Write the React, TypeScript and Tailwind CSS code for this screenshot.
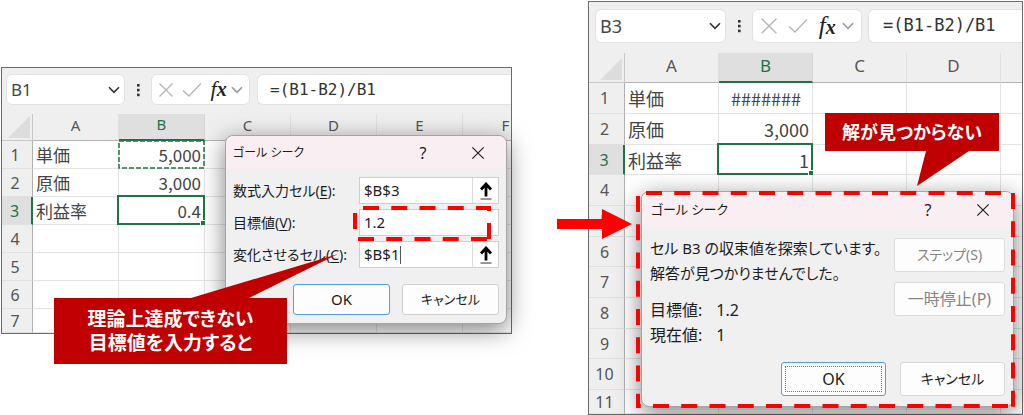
import { useId, type ReactNode } from "react";
import clsx from "clsx";

type Size = "sm" | "lg";
type Mark = "copied" | "selected";

interface Cell {
  label?: string;
  value?: string;
  mark?: Mark;
}

const SHEET_STYLES = {
  sm: {
    bar: "pt-1.5 pb-[9px] pl-1",
    box: "h-[31px]",
    nameBox: "w-[119px]",
    tools: "w-[99px] mr-[7px] px-1.5",
    headCol: "w-[31px]",
    col: "w-[86px]",
    headRow: "h-[27px] text-[15px]",
    row: "h-7 last:h-6",
    text: "text-[17px]",
    formula: "text-[16px] pl-3",
    tool: "size-4",
    fx: "text-[22px]",
  },
  lg: {
    bar: "pt-[7px] pb-2.5 pl-1.5",
    box: "h-[34px]",
    nameBox: "w-[131px]",
    tools: "w-[110px] mr-1.5 px-[7px]",
    headCol: "w-9",
    col: "w-[94px]",
    headRow: "h-[30px] text-[17px]",
    row: "h-[31px] nth-[3n]:h-[30px] last:h-6",
    text: "text-[18px]",
    formula: "text-[17px] pl-3.5",
    tool: "size-[18px]",
    fx: "text-[25px]",
  },
};

const LEFT_ROWS: Cell[] = [
  { label: "単価", value: "5,000", mark: "copied" },
  { label: "原価", value: "3,000" },
  { label: "利益率", value: "0.4", mark: "selected" },
  {},
  {},
  {},
  {},
];

const RIGHT_ROWS: Cell[] = [
  { label: "単価", value: "#######" },
  { label: "原価", value: "3,000" },
  { label: "利益率", value: "1", mark: "selected" },
  {},
  {},
  {},
  {},
  {},
  {},
  {},
  {},
];

function Chevron({ className }: { className?: string }) {
  return (
    <svg viewBox="0 0 12 8" className={clsx("h-2 w-3", className)} fill="none" stroke="currentColor" strokeWidth="1.6">
      <path d="M1 1.2 6 6.4 11 1.2" />
    </svg>
  );
}

function CloseIcon({ className }: { className?: string }) {
  return (
    <svg viewBox="0 0 16 16" className={className} fill="none" stroke="currentColor" strokeWidth="1.3">
      <path d="M1.5 1.5 14.5 14.5M14.5 1.5 1.5 14.5" />
    </svg>
  );
}

function FormulaBar({ size, name }: { size: Size; name: string }) {
  const s = SHEET_STYLES[size];
  const box = clsx("flex shrink-0 items-center border border-[#e2e2e2] bg-white", s.box);

  return (
    <div className={clsx("flex items-center", s.bar)}>
      <div className={clsx(box, s.nameBox, "rounded-md pr-1 pl-1")}>
        <input
          aria-label="名前ボックス"
          defaultValue={name}
          className={clsx("w-full min-w-0 bg-transparent text-[#444] outline-none", s.text)}
        />
        <button type="button" aria-label="名前の一覧" className="text-[#333]">
          <Chevron />
        </button>
      </div>
      <svg viewBox="0 0 26 14" className="h-3.5 w-[26px] shrink-0" fill="#333">
        <rect x="12" y="1" width="2.6" height="2.6" />
        <rect x="12" y="5.8" width="2.6" height="2.6" />
        <rect x="12" y="10.6" width="2.6" height="2.6" />
      </svg>
      <div className={clsx(box, s.tools, "justify-between rounded-md text-[#b5b5b5]")}>
        <button type="button" aria-label="キャンセル">
          <CloseIcon className={s.tool} />
        </button>
        <button type="button" aria-label="入力" className="ml-1">
          <svg viewBox="0 0 20 16" className="h-4 w-5" fill="none" stroke="currentColor" strokeWidth="1.3">
            <path d="M1 8.5 7 14 19 1.5" />
          </svg>
        </button>
        <button
          type="button"
          aria-label="関数の挿入"
          className={clsx("ml-1 pb-0.5 font-['Liberation_Serif',serif] leading-none text-[#222] italic", s.fx)}
        >
          f<b className="text-[20px]">x</b>
        </button>
        <Chevron className="text-[#999]" />
      </div>
      <div className={clsx(box, s.formula, "min-w-0 flex-1 shrink rounded-l-md border-r-0")}>
        <input
          aria-label="数式バー"
          defaultValue="=(B1-B2)/B1"
          className="w-full min-w-0 bg-transparent font-['DejaVu_Sans_Mono',monospace] text-[#333] outline-none"
        />
      </div>
    </div>
  );
}

function CellMark({ mark }: { mark: Mark }) {
  if (mark === "copied") {
    return (
      <svg className="absolute inset-0 size-full overflow-visible" fill="none" stroke="#217346" strokeWidth="1.5" strokeDasharray="5 2">
        <rect width="100%" height="100%" />
      </svg>
    );
  }
  return (
    <span className="absolute -top-0.5 -right-px -bottom-px -left-0.5 border-2 border-[#217346]">
      <span className="absolute -right-[3px] -bottom-[3px] size-[5px] bg-[#217346] outline outline-white" />
    </span>
  );
}

function Sheet({ size, name, columns, rows }: { size: Size; name: string; columns: string[]; rows: Cell[] }) {
  const s = SHEET_STYLES[size];

  return (
    <div className="overflow-hidden border border-[#6b6b6b] bg-[#efefef]">
      <FormulaBar size={size} name={name} />
      <table className="w-full table-fixed border-separate border-spacing-0">
        <colgroup>
          <col className={s.headCol} />
          {columns.map((c) => (
            <col key={c} className={s.col} />
          ))}
        </colgroup>
        <thead>
          <tr className={s.headRow}>
            <th className="border-r border-b border-[#c8c8c8] p-0.5 pl-1.5 align-bottom">
              <svg viewBox="0 0 22 22" className="ml-auto block size-[22px]" fill="#dcdcdc">
                <path d="M22 0V22H0Z" />
              </svg>
            </th>
            {columns.map((c) => (
              <th
                key={c}
                scope="col"
                className={clsx(
                  "border-r p-0 pb-1 leading-none font-normal",
                  c === "B"
                    ? "border-b-2 border-r-[#d5d5d5] border-b-[#217346] bg-[#dfdfdf] text-[#217346]"
                    : "border-b border-r-[#e0e0e0] border-b-[#b5b5b5] text-[#555]",
                )}
              >
                {c}
              </th>
            ))}
          </tr>
        </thead>
        <tbody>
          {rows.map((row, i) => (
            <tr key={i} className={s.row}>
              <th
                scope="row"
                className={clsx(
                  "border-b border-b-[#e0e0e0] p-0 text-[16px] leading-none font-normal",
                  row.mark === "selected"
                    ? "border-r-2 border-r-[#217346] bg-[#dfdfdf] pr-1 text-[#217346]"
                    : "border-r border-r-[#b0b0b0] pr-1 text-[#555]",
                )}
              >
                {i + 1}
              </th>
              {columns.map((c) => (
                <td
                  key={c}
                  className={clsx(
                    "relative border-r border-b border-[#e4e4e4] bg-white p-0 px-[3px] font-['Noto_Sans_CJK_JP',sans-serif] leading-none whitespace-nowrap text-[#444]",
                    s.text,
                    c === "B" && "text-right",
                  )}
                >
                  {c === "A" && row.label}
                  {c === "B" && (row.value?.startsWith("#") ? <span className="mr-2">{row.value}</span> : row.value)}
                  {c === "B" && row.mark && <CellMark mark={row.mark} />}
                </td>
              ))}
            </tr>
          ))}
        </tbody>
      </table>
    </div>
  );
}

function Dialog({ className, titleClass, children }: { className: string; titleClass: string; children: ReactNode }) {
  return (
    <section
      role="dialog"
      aria-label="ゴール シーク"
      className={clsx(
        "absolute rounded-lg border border-[#a5a5a5] bg-[#f0f0f0] text-[#1c1c1c] shadow-[0_6px_24px_rgba(0,0,0,0.5)]",
        className,
      )}
    >
      <header className={clsx("flex items-center rounded-t-lg bg-[#f9eff2]", titleClass)}>
        <h2 className="flex-1">ゴール シーク</h2>
        <button type="button" aria-label="ヘルプ" className="w-6 text-[16px]">
          ?
        </button>
        <button type="button" aria-label="閉じる" className="ml-9">
          <CloseIcon className="size-3.5" />
        </button>
      </header>
      {children}
    </section>
  );
}

function DialogButton({ className, ...props }: React.ComponentProps<"button">) {
  return (
    <button
      type="button"
      className={clsx("rounded-[3px] border bg-[#fdfdfd] leading-none disabled:text-[#858585]", className)}
      {...props}
    />
  );
}

function RefField({ label, hotkey, value, picker, caret }: { label: string; hotkey: string; value: string; picker?: boolean; caret?: boolean }) {
  const id = useId();

  return (
    <div className="flex items-center">
      <label htmlFor={id} className="flex-1 text-[14px] whitespace-nowrap">
        {label}(<u className="underline-offset-2">{hotkey}</u>):
      </label>
      <div className="relative flex h-[27px] w-[140px] border border-[#cfcfcf] bg-white">
        <input id={id} defaultValue={value} className="w-full min-w-0 bg-transparent pl-1 text-[15px] outline-none" />
        {caret && <span className="absolute top-1 left-10 h-[18px] w-px bg-[#555]" />}
        {picker && (
          <button type="button" aria-label="セルを選択" className="flex w-[26px] shrink-0 items-center justify-center border-l border-[#dcdcdc]">
            <svg viewBox="0 0 14 18" className="h-[18px] w-3.5">
              <path d="M7 14.5V2.5M2 7.5 7 2 12 7.5" fill="none" stroke="#000" strokeWidth="2.8" />
              <path d="M1.5 17H12.5" stroke="#333" strokeWidth="1" />
            </svg>
          </button>
        )}
      </div>
    </div>
  );
}

function DashedFrame({ d }: { d: string }) {
  return (
    <svg className="pointer-events-none absolute inset-0 size-full overflow-visible" fill="none" stroke="#f00" strokeWidth="4" strokeDasharray="16 12.25">
      <path d={d} />
    </svg>
  );
}

function Callout({ className, children }: { className: string; children: ReactNode }) {
  return (
    <div className={clsx("absolute z-10 flex items-center justify-center bg-[#c00000] text-center leading-6 font-bold whitespace-nowrap text-white", className)}>
      {children}
    </div>
  );
}

export default function App() {
  return (
    <main className="grid w-full grid-cols-[minmax(0,511fr)_76px_minmax(0,435fr)] items-start overflow-hidden bg-white px-px pt-px font-['Noto_Sans','Noto_Sans_CJK_JP',sans-serif] [font-feature-settings:'palt']">
      <div className="relative mt-[66px]">
        <Sheet size="sm" name="B1" columns={["A", "B", "C", "D", "E", "F"]} rows={LEFT_ROWS} />
        <Dialog className="top-[68px] left-[224px] w-[282px] text-[15px]" titleClass="h-[33px] pr-[21px] pl-[7px] text-[12px]">
          <form className="px-[7px] pt-2 pb-2">
            <div className="flex flex-col gap-[5px]">
              <RefField label="数式入力セル" hotkey="E" value="$B$3" picker />
              <RefField label="目標値" hotkey="V" value="1.2" />
              <RefField label="変化させるセル" hotkey="C" value="$B$1" picker caret />
            </div>
            <div className="mt-4 flex justify-end gap-3">
              <DialogButton className="h-[31px] w-[97px] border-[#4f9fdc]">OK</DialogButton>
              <DialogButton className="h-[31px] w-[97px] border-[#d0d0d0] text-[13px]">キャンセル</DialogButton>
            </div>
          </form>
          <DashedFrame d="M137 72H263V76M263 87V104M261 103H129M129 93V77" />
        </Dialog>
        <Callout className="top-[231px] left-[53px] h-[66px] w-[233px] text-[19px]">
          <p>
            理論上達成できない
            <br />
            目標値を入力すると
          </p>
          <svg viewBox="0 0 147 44" className="absolute bottom-full left-[137px] h-11 w-[147px]" fill="#c00000">
            <path d="M0 44H58L147 0Z" />
          </svg>
        </Callout>
      </div>

      <svg viewBox="0 0 75 30" className="relative z-20 mt-[208px] ml-[45px] h-[30px] w-[75px]" fill="#f00">
        <path d="M0 10H45V0L75 15 45 30V20H0Z" />
      </svg>

      <div className="relative">
        <Sheet size="lg" name="B3" columns={["A", "B", "C", "D", ""]} rows={RIGHT_ROWS} />
        <Dialog className="top-[190px] left-[53px] w-[373px] text-[15px]" titleClass="h-9 pr-[23px] pl-[9px] text-[13px]">
          <div className="px-2 pt-2 pb-2.5">
            <div className="flex justify-between">
              <div className="leading-[25px] whitespace-nowrap">
                <p>
                  セル B3 の収束値を探索しています。
                  <br />
                  解答が見つかりませんでした。
                </p>
                <dl className="mt-3 grid grid-cols-[auto_1fr] gap-x-3.5 text-[16px]">
                  <dt>目標値:</dt>
                  <dd>1.2</dd>
                  <dt>現在値:</dt>
                  <dd>1</dd>
                </dl>
              </div>
              <div className="mt-0.5 flex flex-col gap-2.5">
                <DialogButton disabled className="h-[34px] w-[111px] border-[#dcdcdc] text-[14px]">ステップ(S)</DialogButton>
                <DialogButton disabled className="h-[34px] w-[111px] border-[#dcdcdc] text-[16px]">一時停止(P)</DialogButton>
              </div>
            </div>
            <div className="mt-3.5 flex justify-end gap-3.5">
              <DialogButton className="h-[34px] w-[105px] border-[#4f9fdc] p-[3px] text-[16px]">
                <span className="flex size-full items-center justify-center border border-dotted border-[#777]">OK</span>
              </DialogButton>
              <DialogButton className="h-[34px] w-[105px] border-[#d8d8d8] text-[14px]">キャンセル</DialogButton>
            </div>
          </div>
          <DashedFrame d="M4 1H360M371 1V216M366 214H-5M-4 4V216" />
        </Dialog>
        <Callout className="top-[112px] left-[237px] h-[38px] w-[174px] text-[18px]">
          解が見つからない
          <svg viewBox="0 0 52 35" className="absolute top-full left-[92px] h-[35px] w-[52px]" fill="#c00000">
            <path d="M9 0H52L0 35Z" />
          </svg>
        </Callout>
      </div>
    </main>
  );
}
